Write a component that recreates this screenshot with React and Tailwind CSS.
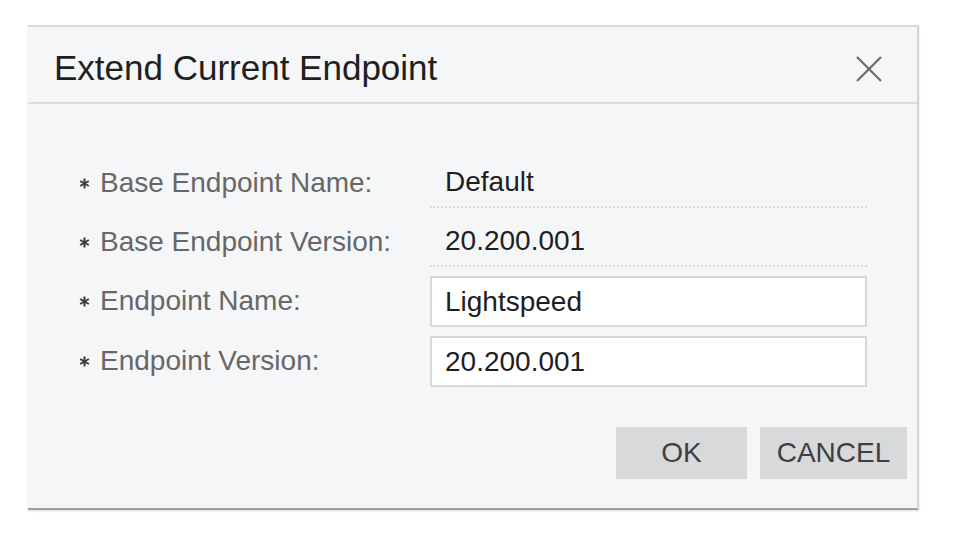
import React from "react";

const font = { fontFamily: '"Liberation Sans", Arial, sans-serif' };

function Asterisk() {
  return (
    <svg width="11" height="11" viewBox="0 0 11 11" className="shrink-0">
      <g stroke="#3a3a3a" strokeWidth="2" strokeLinecap="butt">
        <line x1="5.5" y1="0.5" x2="5.5" y2="10.5" />
        <line x1="1.2" y1="3" x2="9.8" y2="8" />
        <line x1="1.2" y1="8" x2="9.8" y2="3" />
      </g>
    </svg>
  );
}

function Label({ children }) {
  return (
    <div className="flex h-[50px] items-center gap-[10px] text-[28px] text-[#676767]">
      <Asterisk />
      <span>{children}</span>
    </div>
  );
}

function StaticValue({ children }) {
  return (
    <div className="flex h-[50px] items-center border-b-2 border-dotted border-[#dadbdd] pl-[15px] text-[28px] text-[#1e1e1e]">
      {children}
    </div>
  );
}

function InputValue({ value }) {
  return (
    <input
      readOnly
      value={value}
      className="h-[51px] w-full border-2 border-[#d7d8da] bg-white pl-[13px] text-[28px] text-[#1e1e1e] outline-none"
      style={font}
    />
  );
}

export default function App() {
  return (
    <div className="h-[537px] w-[957px] overflow-hidden bg-white pt-[25px]" style={font}>
      <div className="ml-[28px] h-[485px] w-[891px] border-t-2 border-r-2 border-b-2 border-t-[#d9dadc] border-r-[#d3d4d6] border-b-[#9e9e9e] bg-[#f5f6f8] shadow-[0_1px_2px_rgba(0,0,0,0.15)]">
        <div className="flex h-[77px] items-start justify-between border-b-2 border-[#dcdde0] pl-[26px] pr-[35px]">
          <div className="pt-[23px] text-[35px] leading-[35px] text-[#1f1f1f]">
            Extend Current Endpoint
          </div>
          <svg width="26" height="26" viewBox="0 0 26 26" className="mt-[29px]">
            <g stroke="#6a6a6a" strokeWidth="2.2">
              <line x1="1" y1="1" x2="25" y2="25" />
              <line x1="25" y1="1" x2="1" y2="25" />
            </g>
          </svg>
        </div>
        <div className="pl-[51px] pt-[54px]">
          <div className="grid grid-cols-[351px_437px] gap-y-[9px]">
            <Label>Base Endpoint Name:</Label>
            <StaticValue>Default</StaticValue>
            <Label>Base Endpoint Version:</Label>
            <StaticValue>20.200.001</StaticValue>
            <Label>Endpoint Name:</Label>
            <InputValue value="Lightspeed" />
            <Label>Endpoint Version:</Label>
            <InputValue value="20.200.001" />
          </div>
        </div>
        <div className="mt-[40px] flex justify-end gap-[13px] pr-[10px]">
          <button className="h-[52px] w-[131px] bg-[#d8d9db] text-[28px] leading-[52px] text-[#3f3f3f]" style={font}>
            OK
          </button>
          <button className="h-[52px] w-[147px] bg-[#d8d9db] text-[28px] leading-[52px] text-[#3f3f3f]" style={font}>
            CANCEL
          </button>
        </div>
      </div>
    </div>
  );
}
